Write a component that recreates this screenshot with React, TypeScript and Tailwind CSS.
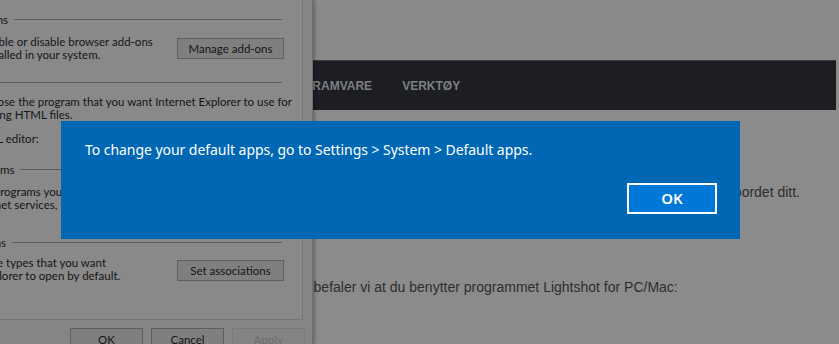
import React from 'react'

const ui = { fontFamily: '"Noto Sans", "Open Sans", sans-serif' }
const dlg = { fontFamily: 'Lato, "Noto Sans", sans-serif' }
const web = { fontFamily: '"Liberation Sans", Arial, sans-serif' }

function GroupHeader({ label }: { label: string }) {
  return (
    <div className="flex items-center h-[14px] pr-[20px]">
      <span className="whitespace-nowrap">{label}</span>
      <div className="flex-1 h-px bg-[#5c5c5c] ml-[6px]" />
    </div>
  )
}

function WinButton({ children, disabled }: { children: React.ReactNode; disabled?: boolean }) {
  return (
    <div
      className={
        disabled
          ? 'w-[73px] h-[23px] flex items-center justify-center border border-[#7a7a7a] bg-[#848484] text-[#6c6c6c]'
          : 'w-[73px] h-[23px] flex items-center justify-center border border-[#5e5e5e] bg-[#7f7f7f] text-[#151515]'
      }
    >
      {children}
    </div>
  )
}

function OptionsDialog() {
  return (
    <div
      className="absolute top-0 left-0 w-[313px] h-[344px] bg-[#858585] border-r border-[#6e6e6e] shadow-[2px_0_3px_rgba(0,0,0,0.25)] text-[11.5px] leading-[13px] text-[#151515] overflow-hidden"
      style={dlg}
    >
      <div className="w-[304px] h-[320px] bg-[#898989] border-r border-b border-[#777777] -ml-px">
        <div className="ml-[-75px]">
          <div className="pt-[12px]">
            <GroupHeader label="Manage add-ons" />
          </div>
          <div className="mt-[9px] flex justify-between pr-[18px]">
            <div className="pl-[56px] whitespace-nowrap">
              <div>Enable or disable browser add-ons</div>
              <div>installed in your system.</div>
            </div>
            <div className="mt-[3px] w-[107px] h-[21px] flex items-center justify-center border border-[#5e5e5e] bg-[#7f7f7f]">
              Manage add-ons
            </div>
          </div>
          <div className="mt-[14px]">
            <GroupHeader label="HTML editing" />
          </div>
          <div className="mt-[6px] pl-[53px] whitespace-nowrap">
            <div>Choose the program that you want Internet Explorer to use for</div>
            <div>editing HTML files.</div>
          </div>
          <div className="mt-[11px] pl-[47px] h-[13px] whitespace-nowrap">HTML editor:</div>
          <div className="mt-[17px]">
            <GroupHeader label="Internet programs" />
          </div>
          <div className="mt-[9px] whitespace-nowrap h-[26px]">
            <div className="pl-[9px]">Choose the programs you want to use for other</div>
            <div className="pl-[47px]">Internet services, such as email.</div>
          </div>
          <div className="mt-[24px]">
            <GroupHeader label="File associations" />
          </div>
          <div className="mt-[7px] flex justify-between pr-[18px]">
            <div className="whitespace-nowrap">
              <div className="pl-[3px]">Choose the file types that you want</div>
              <div className="pl-[13px]">Internet Explorer to open by default.</div>
            </div>
            <div className="mt-[4px] w-[107px] h-[21px] flex items-center justify-center border border-[#5e5e5e] bg-[#7f7f7f]">
              Set associations
            </div>
          </div>
        </div>
      </div>
      <div className="mt-[8px] flex justify-end gap-[8px] pr-[7px]">
        <WinButton>OK</WinButton>
        <WinButton>Cancel</WinButton>
        <WinButton disabled>Apply</WinButton>
      </div>
    </div>
  )
}

function DefaultAppsNotice() {
  return (
    <div className="absolute left-[61px] top-[121px] w-[679px] h-[118px] bg-[#0067b4] text-white" style={ui}>
      <div className="pt-[19px] pl-[24px] text-[14px] leading-[20px] whitespace-nowrap tracking-[-0.05px]">
        To change your default apps, go to Settings &gt; System &gt; Default apps.
      </div>
      <div className="flex justify-end pr-[23px] mt-[23px]">
        <div className="w-[90px] h-[31px] border-2 border-white bg-[#0078d7] flex items-center justify-center text-[15px] font-semibold">
          OK
        </div>
      </div>
    </div>
  )
}

export default function App() {
  return (
    <div className="relative w-[839px] h-[344px] overflow-hidden bg-[#8b8b8b]" style={web}>
      <div className="h-[60px] bg-[#898989]" />
      <div className="h-[50px] w-[836px] bg-[#1c1e24] border-t border-[#3a3c41] flex items-center gap-[30px] pl-[277px] text-[12px] font-bold text-[#7e7f82]">
        <span>PROGRAMVARE</span>
        <span>VERKTØY</span>
      </div>
      <div className="text-[14px] leading-[20px] text-[#2e2e2e]">
        <div className="mt-[72px] w-[800px] text-right whitespace-nowrap">
          Trykk på tasten Print Screen, så lagres et bilde av skjermen på skrivebordet ditt.
        </div>
        <div className="mt-[75px] pl-[298px] whitespace-nowrap">
          anbefaler vi at du benytter programmet Lightshot for PC/Mac:
        </div>
        <div className="mt-[45px] pl-[336px] whitespace-nowrap">
          Last ned og installer, og trykk så på Prt Scr-knappen for å ta et bilde av det du vil dele.
        </div>
      </div>
      <OptionsDialog />
      <DefaultAppsNotice />
    </div>
  )
}
